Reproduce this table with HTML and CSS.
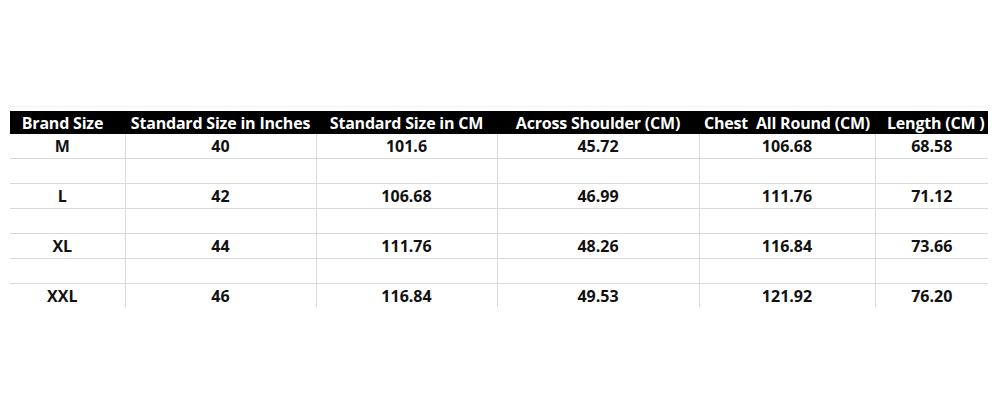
FILE: index.html
```html
<!DOCTYPE html>
<html>
<head>
<meta charset="utf-8">
<link rel="stylesheet" href="styles.css">
</head>
<body>
<div class="page">
  <div class="topline"></div>
  <div class="clip">
    <table class="chart">
      <colgroup>
        <col class="c1"><col class="c2"><col class="c3"><col class="c4"><col class="c5"><col class="c6">
      </colgroup>
      <thead>
        <tr>
          <th class="first">Brand Size</th>
          <th>Standard Size in Inches</th>
          <th>Standard Size in CM</th>
          <th>Across Shoulder (CM)</th>
          <th>Chest&nbsp; All Round (CM)</th>
          <th class="last">Length (CM )</th>
        </tr>
      </thead>
      <tbody>
        <tr><td class="first">M</td><td>40</td><td>101.6</td><td>45.72</td><td>106.68</td><td>68.58</td></tr>
        <tr class="blank"><td class="first"></td><td></td><td></td><td></td><td></td><td></td></tr>
        <tr><td class="first">L</td><td>42</td><td>106.68</td><td>46.99</td><td>111.76</td><td>71.12</td></tr>
        <tr class="blank"><td class="first"></td><td></td><td></td><td></td><td></td><td></td></tr>
        <tr><td class="first">XL</td><td>44</td><td>111.76</td><td>48.26</td><td>116.84</td><td>73.66</td></tr>
        <tr class="blank"><td class="first"></td><td></td><td></td><td></td><td></td><td></td></tr>
        <tr><td class="first">XXL</td><td>46</td><td>116.84</td><td>49.53</td><td>121.92</td><td>76.20</td></tr>
      </tbody>
    </table>
  </div>
</div>
</body>
</html>
```
FILE: styles.css
```css
html, body {
  margin: 0;
  padding: 0;
  background: #ffffff;
}
.page {
  width: 1000px;
  height: 400px;
  padding-top: 106px;
  box-sizing: border-box;
}
.topline {
  margin-left: 10px;
  width: 978px;
  height: 1px;
  background: #f0f0f0;
  margin-bottom: 4px;
}
.clip {
  margin-left: 10px;
  width: 978px;
  height: 196px;
  overflow: hidden;
}
.chart {
  border-collapse: collapse;
  table-layout: fixed;
  width: 978px;
  font-family: "Open Sans", "Liberation Sans", sans-serif;
  font-weight: 700;
  color: #111111;
}
.c1 { width: 115px; }
.c2 { width: 191px; }
.c3 { width: 181px; }
.c4 { width: 202px; }
.c5 { width: 176px; }
.c6 { width: 113px; }
.chart th {
  background: #000000;
  color: #ffffff;
  height: 23px;
  padding: 0;
  font-size: 16px;
  letter-spacing: -0.2px;
  white-space: nowrap;
  text-align: center;
  line-height: 22px;
  overflow: hidden;
}
.chart th.first { padding-right: 10px; }
.chart th.last { text-align: left; padding-left: 12px; }
.chart td {
  height: 24px;
  padding: 0;
  font-size: 16px;
  text-align: center;
  line-height: 23px;
  border-bottom: 1px solid #d9d9d9;
  border-left: 1px solid #d9d9d9;
}
.chart td.first {
  border-left: none;
  padding-right: 10px;
}
```
